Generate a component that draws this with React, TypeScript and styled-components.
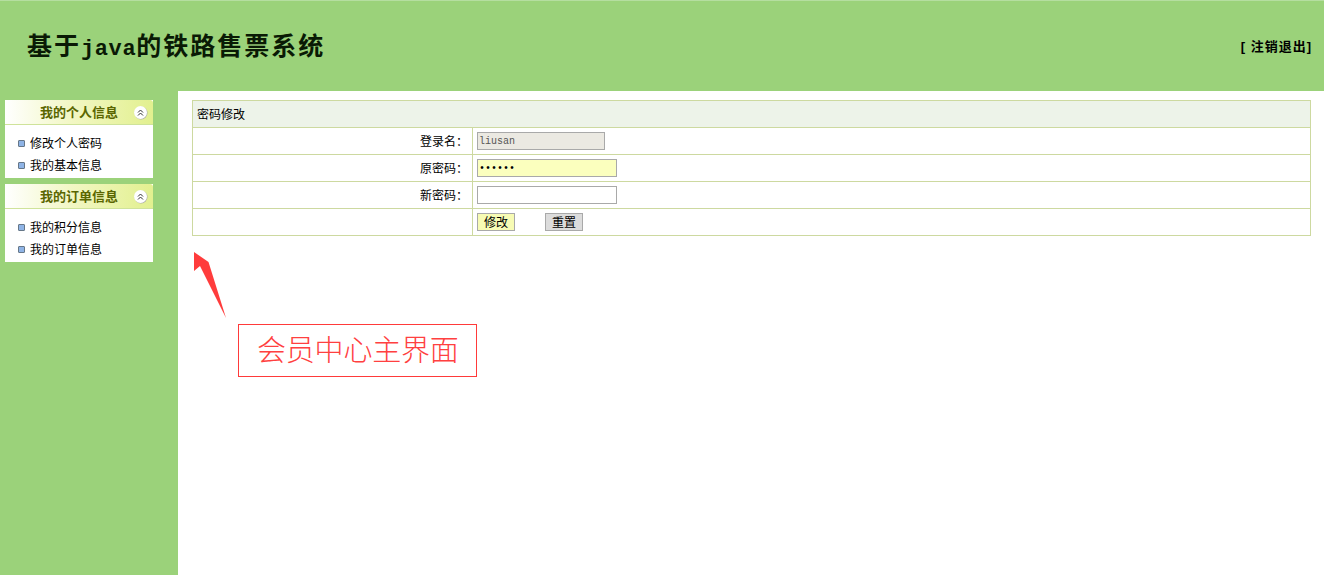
import styled, { createGlobalStyle } from 'styled-components';

const GlobalStyle = createGlobalStyle`
  html, body {
    margin: 0;
    padding: 0;
    background: #fff;
  }
  body {
    font-family: "Liberation Sans", "Noto Sans CJK SC", sans-serif;
    font-size: 12px;
    color: #000;
  }
`;

const Page = styled.div`
  width: 1324px;
  height: 575px;
  overflow: hidden;
  display: flex;
  flex-direction: column;
`;

const Header = styled.header`
  height: 90px;
  flex: none;
  background: #9bd27a;
  border-top: 1px solid #b5dea0;
  display: flex;
  align-items: center;
  justify-content: space-between;
  padding: 0 12px 0 27px;
`;

const Title = styled.h1`
  margin: 2px 0 0;
  font-family: "Noto Sans CJK SC", serif;
  font-size: 25px;
  line-height: 30px;
  font-weight: 700;
  letter-spacing: 2px;
  color: #0a1a05;
`;

const TitleLatin = styled.span`
  font-family: "Liberation Mono", monospace;
  font-size: 22px;
  font-weight: 700;
  letter-spacing: 0.6px;
`;

const Logout = styled.a`
  font-size: 13px;
  font-weight: 700;
  letter-spacing: 1px;
  white-space: pre;
  color: #000;
  margin-bottom: 1px;
`;

const Body = styled.div`
  flex: 1;
  display: flex;
`;

const Sidebar = styled.aside`
  width: 178px;
  flex: none;
  box-sizing: border-box;
  background: #9bd27a;
  padding: 9px 0 0 5px;
  display: flex;
  flex-direction: column;
  gap: 6px;
`;

const Panel = styled.section`
  width: 148px;
  height: 78px;
  background: #fff;
`;

const PanelHead = styled.div`
  height: 24px;
  border-bottom: 1px solid #cfe39a;
  border-radius: 3px 3px 0 0;
  background: linear-gradient(90deg, #ffffff 0%, #f2f7c4 45%, #e2f08f 100%);
  display: flex;
  align-items: center;
  position: relative;
`;

const PanelTitle = styled.span`
  margin: 0 0 2px 35px;
  font-size: 13px;
  font-weight: 700;
  color: #5a6600;
`;

const Collapse = styled.svg`
  position: absolute;
  right: 5px;
  top: 5px;
  width: 15px;
  height: 15px;
`;

const MenuList = styled.ul`
  list-style: none;
  margin: 0;
  padding: 8px 0 0 13px;
`;

const MenuItem = styled.li`
  height: 22px;
  line-height: 22px;
  display: flex;
  align-items: center;
  gap: 5px;
  font-size: 12px;
  color: #000;
`;

const Bullet = styled.i`
  width: 5px;
  height: 5px;
  flex: none;
  margin-bottom: 2px;
  border: 1px solid #667788;
  border-radius: 1px;
  background: #8fb4e6;
`;

const Main = styled.main`
  flex: 1;
  padding: 9px 13px 0 14px;
`;

const FormTable = styled.table`
  width: 1119px;
  border-collapse: collapse;
  table-layout: fixed;
  font-size: 12px;
`;

const Cell = styled.td<{ $right?: boolean }>`
  height: 27px;
  padding: 0 4px;
  border: 1px solid #cdd9a0;
  text-align: ${p => (p.$right ? 'right' : 'left')};
  box-sizing: border-box;
  line-height: 0;
  & > * {
    vertical-align: middle;
  }
`;

const LabelText = styled.span`
  display: inline-block;
  margin-top: 2px;
  line-height: 24px;
  font-size: 12px;
`;

const HeadCell = styled.td`
  height: 27px;
  padding: 0 4px 2px;
  box-sizing: border-box;
  border: 1px solid #cdd9a0;
  background: #edf3e9;
  font-size: 12px;
`;

const Field = styled.input<{ $bg?: string; $w: number; $ink?: string }>`
  box-sizing: border-box;
  width: ${p => p.$w}px;
  height: 18px;
  padding: 0 0 0 1px;
  margin: 0;
  border: 1px solid #a9a9a9;
  outline: none;
  background: ${p => p.$bg || '#fff'};
  font-family: "Liberation Mono", monospace;
  font-size: 10px;
  color: ${p => p.$ink || '#555'};
`;

const Btn = styled.button<{ $bg: string; $gap?: number }>`
  box-sizing: border-box;
  width: 38px;
  height: 18px;
  padding: 2px 0 0;
  margin: 0 0 0 ${p => p.$gap || 0}px;
  border: 1px solid #a9a9a9;
  background: ${p => p.$bg};
  font-family: "Liberation Sans", "Noto Sans CJK SC", sans-serif;
  font-size: 12px;
  line-height: 14px;
  color: #000;
`;

const Annotation = styled.div`
  display: flex;
  flex-direction: column;
  align-items: flex-start;
`;

const Arrow = styled.svg`
  display: block;
  width: 36px;
  height: 70px;
  margin: 15px 0 0 1px;
`;

const Callout = styled.div`
  box-sizing: border-box;
  width: 239px;
  height: 53px;
  margin: 3px 0 0 46px;
  padding-left: 18px;
  border: 1px solid #ff3a3a;
  font-family: "Noto Sans CJK SC", serif;
  font-size: 29px;
  font-weight: 300;
  letter-spacing: -0.2px;
  line-height: 47px;
  color: #ff4040;
  white-space: nowrap;
`;

const Section = ({ title, items }: { title: string; items: string[] }) => (
  <Panel>
    <PanelHead>
      <PanelTitle>{title}</PanelTitle>
      <Collapse viewBox="0 0 15 15">
        <circle cx="8" cy="8" r="6.5" fill="#a8a8a8" />
        <circle cx="7.5" cy="7.5" r="6.5" fill="#fff" />
        <path d="M5 7.5 7.5 5 10 7.5M5 10.5 7.5 8 10 10.5" fill="none" stroke="#333" strokeWidth="1" />
      </Collapse>
    </PanelHead>
    <MenuList>
      {items.map(item => (
        <MenuItem key={item}>
          <Bullet />
          {item}
        </MenuItem>
      ))}
    </MenuList>
  </Panel>
);

const App = () => (
  <>
    <GlobalStyle />
    <Page>
      <Header>
        <Title>
          基于<TitleLatin>java</TitleLatin>的铁路售票系统
        </Title>
        <Logout>[ 注销退出]</Logout>
      </Header>
      <Body>
        <Sidebar>
          <Section title="我的个人信息" items={['修改个人密码', '我的基本信息']} />
          <Section title="我的订单信息" items={['我的积分信息', '我的订单信息']} />
        </Sidebar>
        <Main>
          <FormTable>
            <colgroup>
              <col width="280" />
              <col />
            </colgroup>
            <tbody>
              <tr>
                <HeadCell colSpan={2}>密码修改</HeadCell>
              </tr>
              <tr>
                <Cell $right><LabelText>登录名：</LabelText></Cell>
                <Cell><Field $w={128} $bg="#ebe9e2" readOnly defaultValue="liusan" /></Cell>
              </tr>
              <tr>
                <Cell $right><LabelText>原密码：</LabelText></Cell>
                <Cell><Field $w={140} $bg="#fbffbe" $ink="#000" type="password" defaultValue="123456" /></Cell>
              </tr>
              <tr>
                <Cell $right><LabelText>新密码：</LabelText></Cell>
                <Cell><Field $w={140} type="password" /></Cell>
              </tr>
              <tr>
                <Cell />
                <Cell>
                  <Btn $bg="#f7fbb4">修改</Btn>
                  <Btn $bg="#dcdcdc" $gap={30}>重置</Btn>
                </Cell>
              </tr>
            </tbody>
          </FormTable>
          <Annotation>
            <Arrow viewBox="0 0 36 70">
              <path d="M1 1 L1 20 L7 15 L33 67 L15.5 11 Z" fill="#ff3c3c" />
            </Arrow>
            <Callout>会员中心主界面</Callout>
          </Annotation>
        </Main>
      </Body>
    </Page>
  </>
);

export default App;
